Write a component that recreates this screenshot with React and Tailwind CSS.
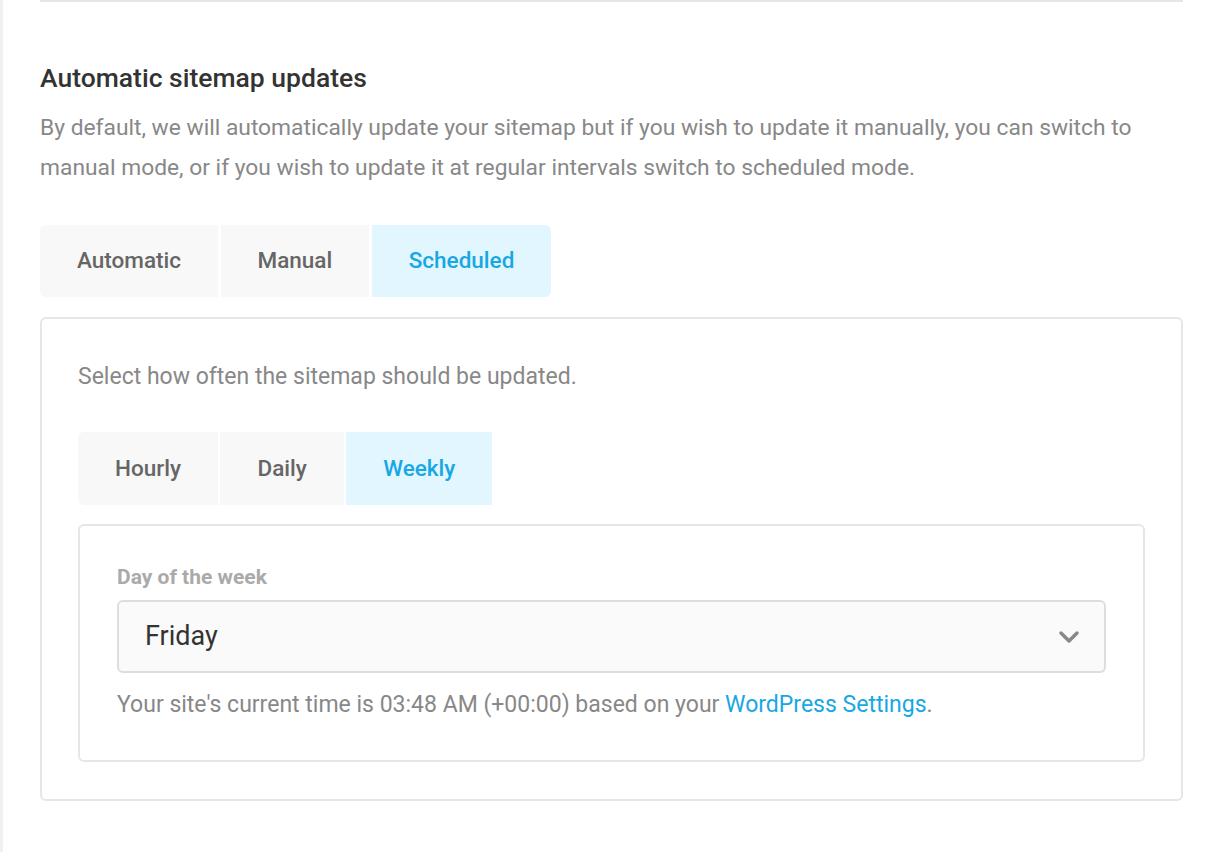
import React from 'react';

const tabBase = 'flex items-center px-[37px] text-[22.5px] font-medium';

function Tabs({ items, active, roundRight, height }) {
  return (
    <div className="flex gap-[2.5px] self-start">
      {items.map((label, i) => {
        const on = label === active;
        const first = i === 0;
        const last = i === items.length - 1;
        return (
          <div
            key={label}
            className={`${tabBase} ${height} ${on ? 'bg-[#e1f6ff] text-[#17a8e3]' : 'bg-[#f8f8f8] text-[#666]'} ${first ? 'rounded-l-[6px]' : ''} ${last && roundRight ? 'rounded-r-[6px]' : ''}`}
          >
            {label}
          </div>
        );
      })}
    </div>
  );
}

export default function App() {
  return (
    <div className="flex min-h-[852px] bg-white" style={{ fontFamily: 'Roboto, "Liberation Sans", sans-serif' }}>
      <div className="w-[3px] shrink-0 bg-[#f0f0f0]" />
      <div className="flex-1 pl-[37px] pr-[37px]">
        <div className="border-t-2 border-[#e6e6e6] pt-[60px] pb-[50px]">
          <h3 className="text-[26.5px] font-medium leading-[32px] text-[#333]">Automatic sitemap updates</h3>
          <p className="mt-[14px] text-[22.8px] leading-[40px] text-[#888]">
            By default, we will automatically update your sitemap but if you wish to update it manually, you can switch to manual mode, or if you wish to update it at regular intervals switch to scheduled mode.
          </p>

          <div className="mt-[37px] flex flex-col">
            <Tabs items={['Automatic', 'Manual', 'Scheduled']} active="Scheduled" roundRight height="h-[72px]" />

            <div className="mt-[20px] border-2 border-[#e6e6e6] rounded-[6px] pt-[38px] px-[36px] pb-[37px] flex flex-col">
              <p className="text-[23px] leading-[40px] text-[#888]">Select how often the sitemap should be updated.</p>

              <div className="mt-[35px] flex">
                <Tabs items={['Hourly', 'Daily', 'Weekly']} active="Weekly" height="h-[73px]" />
              </div>

              <div className="mt-[19px] border-2 border-[#e6e6e6] rounded-[6px] pt-[39px] pb-[35px] px-[37px]">
                <div className="text-[21px] font-bold leading-[24px] text-[#aaa]">Day of the week</div>
                <div className="mt-[11px] h-[73px] flex items-center justify-between bg-[#fafafa] border-2 border-[#ddd] rounded-[6px] pl-[26px] pr-[24px]">
                  <span className="text-[27px] text-[#333]">Friday</span>
                  <svg width="22" height="14" viewBox="0 0 22 14" fill="none">
                    <path d="M3 3 L11 11 L19 3" stroke="#888" strokeWidth="3.5" strokeLinecap="round" strokeLinejoin="round" />
                  </svg>
                </div>
                <p className="mt-[12px] text-[23px] leading-[40px] text-[#888]">
                  Your site's current time is 03:48 AM (+00:00) based on your{' '}
                  <a href="#" className="text-[#17a8e3]">WordPress Settings</a>.
                </p>
              </div>
            </div>
          </div>
        </div>
      </div>
    </div>
  );
}
